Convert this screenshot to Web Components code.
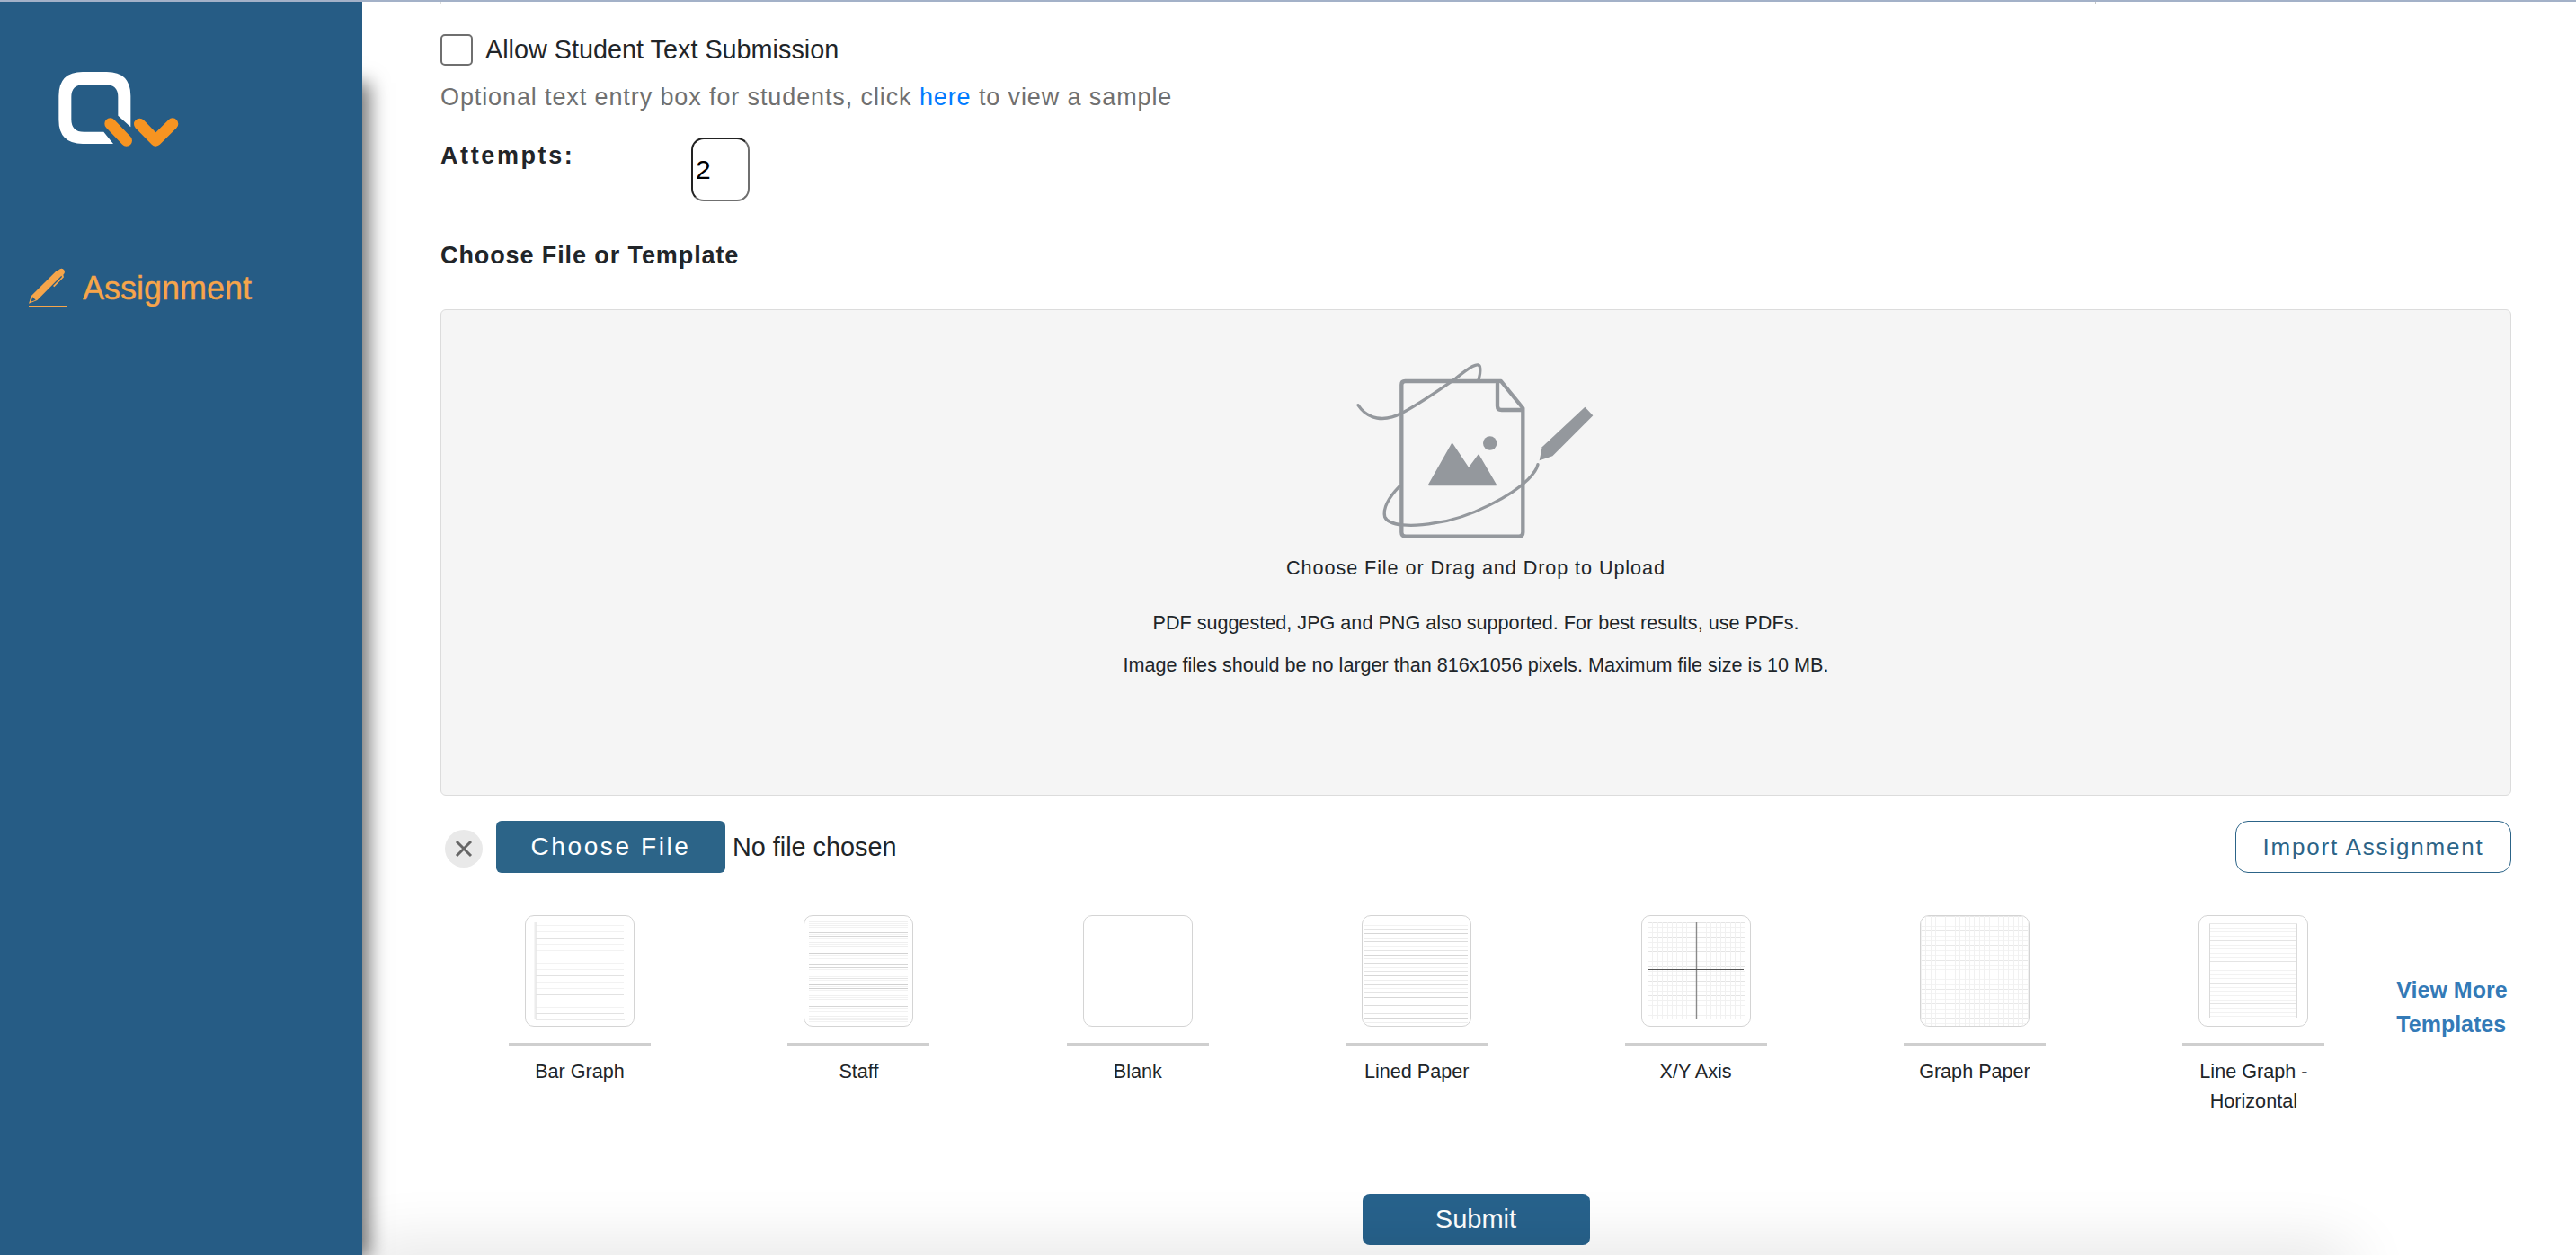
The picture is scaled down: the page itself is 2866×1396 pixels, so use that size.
<!DOCTYPE html>
<html>
<head>
<meta charset="utf-8">
<title>Assignment</title>
<style>
    html, body { margin: 0; padding: 0; height: 100%; overflow: hidden; background: #fff; }
    body { font-family: "Liberation Sans", Arial, sans-serif; color: #212529; }
</style>
</head>
<body>
<qv-app>
    <qv-sidebar slot="side" label="Assignment"></qv-sidebar>
    <qv-editor-edge></qv-editor-edge>
    <qv-check-row>Allow Student Text Submission</qv-check-row>
    <qv-hint>Optional text entry box for students, click <a>here</a> to view a sample</qv-hint>
    <qv-attempts value="2">Attempts:</qv-attempts>
    <qv-title>Choose File or Template</qv-title>
    <qv-dropzone>
        <p class="lead">Choose File or Drag and Drop to Upload</p>
        <p>PDF suggested, JPG and PNG also supported. For best results, use PDFs.</p>
        <p>Image files should be no larger than 816x1056 pixels. Maximum file size is 10 MB.</p>
    </qv-dropzone>
    <qv-file-row></qv-file-row>
    <qv-template-strip>
        <qv-template kind="bar">Bar Graph</qv-template>
        <qv-template kind="staff">Staff</qv-template>
        <qv-template kind="blank">Blank</qv-template>
        <qv-template kind="lined">Lined Paper</qv-template>
        <qv-template kind="axis">X/Y Axis</qv-template>
        <qv-template kind="graph">Graph Paper</qv-template>
        <qv-template kind="line">Line Graph - Horizontal</qv-template>
    </qv-template-strip>
    <qv-submit>Submit</qv-submit>
</qv-app>

<script>
// small helper so every element below is just a class with a render string
class QvBase extends HTMLElement {
    constructor() {
        super();
        this.attachShadow({ mode: 'open' });
    }
    connectedCallback() {
        this.shadowRoot.innerHTML = this.render();
    }
}

class QvApp extends QvBase {
    render() {
        return `
            <style>
                :host { display: flex; flex-direction: column; height: 1396px; overflow: hidden; }
                .top { height: 2px; background: #a3b1c8; flex: none; }
                .row { display: flex; flex: 1; min-height: 0; }
                main {
                    flex: 1;
                    min-width: 0;
                    padding: 0 72px 0 87px;
                    display: flex;
                    flex-direction: column;
                    position: relative;
                }
                .fade {
                    position: absolute;
                    left: 0;
                    bottom: -40px;
                    width: 2210px;
                    height: 40px;
                    border-radius: 40px;
                    box-shadow: 0 0 70px 8px rgba(0,0,0,.12);
                }
            </style>
            <div class="top"></div>
            <div class="row">
                <slot name="side"></slot>
                <main><div class="fade"></div><slot></slot></main>
            </div>
        `;
    }
}

class QvSidebar extends QvBase {
    render() {
        return `
            <style>
                :host {
                    display: block;
                    flex: none;
                    width: 403px;
                    background: #265c85;
                    position: relative;
                    z-index: 2;
                }
                :host::after {
                    content: '';
                    position: absolute;
                    left: 0; right: 0; top: 86px; bottom: 0;
                    box-shadow: 8px 4px 20px rgba(0,0,0,.55);
                    z-index: -1;
                }
                .wrap { background: #265c85; height: 100%; position: relative; }
                .logo { display: block; width: 240px; height: 170px; }
                .nav {
                    display: flex;
                    align-items: center;
                    color: #f6a54a;
                    font-size: 36px;
                    height: 50px;
                    margin-top: 123px;
                    padding-left: 32px;
                }
                .nav svg { flex: none; width: 42px; height: 44px; margin-right: 18px; }
                .nav span { position: relative; top: 1px; -webkit-text-stroke: .3px #f6a54a; }
            </style>
            <div class="wrap">
                <svg class="logo" viewBox="0 6 720 510" aria-hidden="true">
                    <path fill="#fff" d="M436 424V320Q436 240 356 240H276Q196 240 196 320V400Q196 480 276 480H378L346 440H280Q238 440 238 398V324Q238 282 280 282H352Q394 282 394 324V386Z"/>
                    <path fill="none" stroke="#f79421" stroke-width="38" stroke-linecap="round" stroke-linejoin="round" d="M368 413L422 469M466 414L520 469L576 413"/>
                </svg>
                <div class="nav">
                    <svg viewBox="97 885 126 132" aria-hidden="true">
                        <path fill="#f6a54a" d="M97 1004L105 979L188 896L197 892Q203 885 210 888Q219 893 216 903L212 908L214 916L182 949L178 945L208 915L206 911L125 993ZM110 982L104 998L120 992Z"/>
                        <rect x="97" y="1011" width="126" height="5" fill="#f6a54a"/>
                    </svg>
                    <span>${this.getAttribute('label')}</span>
                </div>
            </div>
        `;
    }
}

class QvEditorEdge extends QvBase {
    render() {
        return `
            <style>
                :host { display: block; width: 1842px; height: 3px; box-sizing: border-box;
                    border-bottom: 1px solid #c9c9c9; border-right: 1px solid #c9c9c9; border-left: 1px solid #ddd; }
            </style>
        `;
    }
}

class QvCheckRow extends QvBase {
    render() {
        return `
            <style>
                :host { display: flex; align-items: center; height: 35px; margin-top: 33px; font-size: 28.8px; color: #212529; }
                .box { flex: none; width: 36px; height: 35px; box-sizing: border-box; border: 2px solid #6f6f6f; border-radius: 5px; background: #fff; margin-right: 14px; }
            </style>
            <span class="box"></span><slot></slot>
        `;
    }
}

class QvHint extends QvBase {
    render() {
        return `
            <style>
                :host { display: block; margin-top: 17px; font-size: 27px; line-height: 36px; color: #707070; letter-spacing: .89px; }
                ::slotted(a) { color: #007bff; }
            </style>
            <slot></slot>
        `;
    }
}

class QvAttempts extends QvBase {
    render() {
        return `
            <style>
                :host { display: flex; margin-top: 27px; height: 71px; }
                .label { width: 279px; font-weight: 700; font-size: 27px; line-height: 36px; letter-spacing: 2.6px; margin-top: 2px; color: #212529; }
                .field {
                    width: 65px;
                    height: 71px;
                    box-sizing: border-box;
                    border: 2px solid #6f6f6f;
                    border-top-color: #222;
                    border-left-color: #222;
                    border-radius: 14px;
                    font-size: 30px;
                    color: #000;
                    display: flex;
                    align-items: center;
                    padding-left: 3px;
                }
            </style>
            <div class="label"><slot></slot></div>
            <div class="field">${this.getAttribute('value')}</div>
        `;
    }
}

class QvTitle extends QvBase {
    render() {
        return `
            <style>
                :host { display: block; margin-top: 42px; font-size: 27px; font-weight: 700; line-height: 36px; letter-spacing: .9px; color: #212529; }
            </style>
            <slot></slot>
        `;
    }
}

class QvDropzone extends QvBase {
    render() {
        return `
            <style>
                :host {
                    display: flex;
                    flex-direction: column;
                    align-items: center;
                    box-sizing: border-box;
                    height: 541px;
                    margin-top: 42px;
                    padding-top: 35px;
                    background: #f5f5f5;
                    border: 1px solid #dcdcdc;
                    border-radius: 6px;
                    font-size: 21.6px;
                    line-height: 24px;
                    color: #212529;
                    text-align: center;
                }
                svg { width: 360px; height: 230px; margin: 0 0 10px -24px; }
                ::slotted(p) { margin: 0 0 23px; }
                ::slotted(p.lead) { letter-spacing: .93px; margin-bottom: 37px; }
            </style>
            <svg viewBox="0 0 1080 690" aria-hidden="true">
                <g fill="none" stroke="#94989d" stroke-linecap="round" stroke-linejoin="round">
                    <path stroke-width="13" d="M660 132H340Q328 132 328 144V636Q328 650 342 650H720Q733 650 733 636V222Z"/>
                    <path stroke-width="13" d="M648 140V215Q648 228 662 228H730"/>
                    <path stroke-width="10" d="M183 212C215 260 270 270 330 238C400 200 470 150 510 122C550 90 590 60 590 90C592 105 588 115 585 128"/>
                    <path stroke-width="10" d="M322 482C290 515 265 555 272 585C285 615 360 620 440 605C560 590 700 510 750 460C770 440 780 425 783 410"/>
                </g>
                <g fill="#94989d">
                    <path stroke="#94989d" stroke-width="6" stroke-linejoin="round" d="M420 478L497 342L552 425L585 380L642 478Z"/>
                    <circle cx="623" cy="339" r="23"/>
                    <path d="M940 218L967 247L832 382L788 397L797 352Z"/>
                </g>
            </svg>
            <slot></slot>
        `;
    }
}

class QvFileRow extends QvBase {
    render() {
        return `
            <style>
                :host { display: flex; align-items: center; height: 58px; margin-top: 28px; }
                .clear {
                    flex: none;
                    width: 42px;
                    height: 42px;
                    margin: 4px 15px 0 5px;
                    border-radius: 50%;
                    background: #e9e9e9;
                    display: flex;
                    align-items: center;
                    justify-content: center;
                }
                .clear svg { width: 20px; height: 20px; }
                .choose {
                    flex: none;
                    width: 255px;
                    height: 58px;
                    background: #2c6488;
                    color: #fff;
                    border-radius: 6px;
                    font-size: 28px;
                    letter-spacing: 2.6px;
                    display: flex;
                    align-items: center;
                    justify-content: center;
                }
                .none { margin-left: 8px; font-size: 28.8px; color: #212529; }
                .import {
                    flex: none;
                    margin-left: auto;
                    width: 307px;
                    height: 58px;
                    box-sizing: border-box;
                    border: 1.5px solid #2c6488;
                    border-radius: 14px;
                    color: #2c6488;
                    font-size: 26px;
                    letter-spacing: 1.8px;
                    display: flex;
                    align-items: center;
                    justify-content: center;
                }
            </style>
            <span class="clear">
                <svg viewBox="0 0 20 20" aria-hidden="true"><path d="M2 2L18 18M18 2L2 18" stroke="#666" stroke-width="3" fill="none"/></svg>
            </span>
            <span class="choose">Choose File</span>
            <span class="none">No file chosen</span>
            <span class="import">Import Assignment</span>
        `;
    }
}

class QvTemplateStrip extends QvBase {
    render() {
        return `
            <style>
                :host { display: flex; align-items: flex-start; margin-top: 47px; padding-left: 76px; height: 223px; }
                ::slotted(qv-template) { margin-right: 152.4px; }
                ::slotted(qv-template:last-child) { margin-right: 0; }
                .more {
                    margin: 64px 0 0 80px;
                    width: 130px;
                    font-size: 25px;
                    font-weight: 700;
                    line-height: 38px;
                    color: #337ab7;
                }
            </style>
            <slot></slot>
            <div class="more">View More Templates</div>
        `;
    }
}

// thumbnail drawn on a 122x124 page
function hLines(x1, x2, y1, y2, step, colorAt) {
    let out = '';
    let i = 0;
    for (let y = y1; y <= y2; y += step, i++) {
        out += `<path d="M${x1} ${Math.round(y) + .5}H${x2}" stroke="${colorAt(i)}"/>`;
    }
    return out;
}

function vLines(x1, x2, y1, y2, step, color) {
    let out = '';
    for (let x = x1; x <= x2; x += step) {
        out += `<path d="M${Math.round(x) + .5} ${y1}V${y2}" stroke="${color}"/>`;
    }
    return out;
}

const THUMBS = {
    blank() { return ''; },
    bar() {
        return hLines(12, 110, 11, 114, 7, i => i % 3 === 2 ? '#e2e2e2' : '#f2f2f2') +
            '<path d="M12 8V116H111" stroke="#d6d6d6" stroke-width="1" fill="none"/>' +
            '<path d="M11.5 8V116" stroke="#ececec" stroke-width="2"/>';
    },
    staff() {
        let out = '';
        const colors = ['#f0f0f0', '#d6d6d6', '#efefef', '#d2d2d2', '#d6d6d6', '#e4e4e4', '#d0d0d0', '#f0f0f0', '#d6d6d6', '#f0f0f0'];
        colors.forEach((color, s) => {
            const top = 7 + Math.round(s * 11.7);
            for (let l = 0; l < 4; l += 1) {
                out += `<path d="M6 ${top + l * 2 + .5}H116" stroke="${l === 1 || l === 3 ? '#f2f2f2' : color}"/>`;
            }
        });
        return out;
    },
    lined() {
        return hLines(3, 118, 6, 119, 4.7, i => ['#dcdcdc', '#f2f2f2', '#e4e4e4', '#d6d6d6', '#eeeeee'][i % 5]);
    },
    axis() {
        return hLines(7, 115, 8, 116, 5.4, i => i % 3 === 0 ? '#e4e4e4' : '#f1f1f1') +
            vLines(7, 115, 8, 116, 5.4, '#f1f1f1') +
            '<path d="M61.5 8V116" stroke="#8a8a8a" stroke-width="1.4"/>' +
            '<path d="M8 60.5H114" stroke="#555" stroke-width="1.2"/>';
    },
    graph() {
        return hLines(1, 121, 1, 123, 5.4, i => i % 3 === 0 ? '#e8e8e8' : '#f3f3f3') +
            vLines(1, 121, 1, 123, 5.4, '#f1f1f1');
    },
    line() {
        return hLines(12, 110, 9, 114, 4.7, i => i % 5 === 4 ? '#e4e4e4' : '#f2f2f2') +
            '<path d="M12.5 9V114M109.5 9V114" stroke="#dadada"/><path d="M12 9.5H110" stroke="#e8e8e8"/>';
    }
};

class QvTemplate extends QvBase {
    render() {
        const kind = this.getAttribute('kind');
        return `
            <style>
                :host { display: block; flex: none; width: 158px; text-align: center; font-size: 21.6px; line-height: 33px; color: #212529; }
                .page {
                    display: block;
                    width: 122px;
                    height: 124px;
                    margin: 0 auto;
                    box-sizing: border-box;
                    border: 1px solid #d4d4d4;
                    border-radius: 10px;
                    background: #fff;
                    overflow: hidden;
                }
                svg { display: block; width: 122px; height: 124px; margin: -1px; }
                hr { height: 3px; border: 0; margin: 18px 0 12px; background: #cfcfcf; }
                .name { padding: 0 15px; }
            </style>
            <div class="page">
                <svg viewBox="0 0 122 124" fill="none" stroke-width="1" aria-hidden="true">${THUMBS[kind]()}</svg>
            </div>
            <hr>
            <div class="name"><slot></slot></div>
        `;
    }
}

class QvSubmit extends QvBase {
    render() {
        return `
            <style>
                :host { display: flex; justify-content: center; margin-top: 87px; }
                button {
                    width: 253px;
                    height: 57px;
                    padding: 0;
                    border: 0;
                    border-radius: 8px;
                    background: #27628c;
                    color: #fff;
                    font: 29px "Liberation Sans", Arial, sans-serif;
                }
            </style>
            <button type="button"><slot></slot></button>
        `;
    }
}

customElements.define('qv-app', QvApp);
customElements.define('qv-sidebar', QvSidebar);
customElements.define('qv-editor-edge', QvEditorEdge);
customElements.define('qv-check-row', QvCheckRow);
customElements.define('qv-hint', QvHint);
customElements.define('qv-attempts', QvAttempts);
customElements.define('qv-title', QvTitle);
customElements.define('qv-dropzone', QvDropzone);
customElements.define('qv-file-row', QvFileRow);
customElements.define('qv-template-strip', QvTemplateStrip);
customElements.define('qv-template', QvTemplate);
customElements.define('qv-submit', QvSubmit);
</script>
</body>
</html>
